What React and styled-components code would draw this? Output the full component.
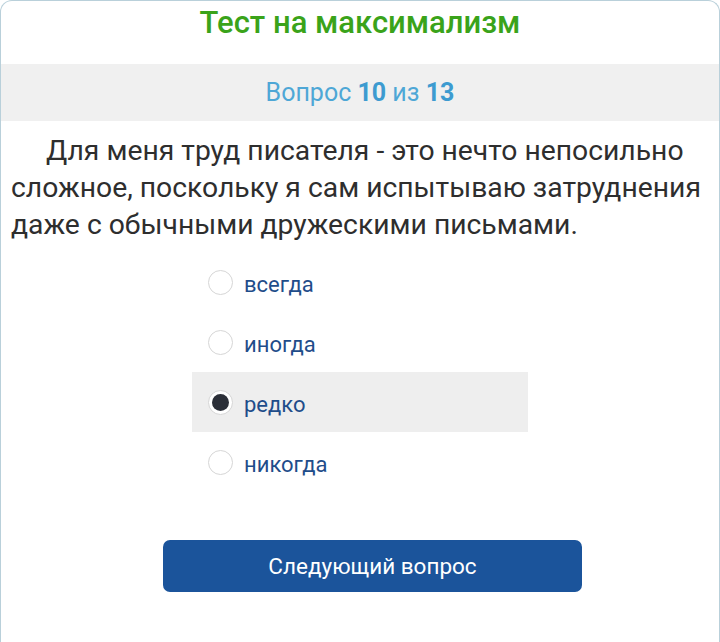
import React, { useState } from "react";
import styled, { createGlobalStyle } from "styled-components";

const GlobalStyle = createGlobalStyle`
  html, body {
    margin: 0;
    padding: 0;
    background: #ffffff;
  }
  body {
    font-family: Roboto, "Noto Sans", sans-serif;
  }
`;

const Card = styled.div`
  box-sizing: border-box;
  width: 720px;
  height: 642px;
  border: 1px solid #b9d0da;
  border-bottom: none;
  border-radius: 12px 12px 0 0;
  background: #ffffff;
  display: flex;
  flex-direction: column;
  overflow: hidden;
`;

const Title = styled.h1`
  margin: 0;
  height: 63px;
  padding-bottom: 20px;
  box-sizing: border-box;
  display: flex;
  align-items: center;
  justify-content: center;
  font-size: 31px;
  font-weight: 500;
  color: #3aa31a;
`;

const Counter = styled.div`
  height: 57px;
  background: #f0f0f0;
  display: flex;
  align-items: center;
  justify-content: center;
  font-size: 25px;
  color: #4ea7d6;
  b {
    font-weight: 700;
    color: #3d9bd0;
  }
`;

const Question = styled.p`
  margin: 11px 0 0;
  padding: 0 10px;
  font-size: 28.3px;
  line-height: 37px;
  text-indent: 35px;
  color: #2e2e2e;
`;

const Options = styled.div`
  width: 336px;
  margin: 9px auto 0;
  display: flex;
  flex-direction: column;
`;

const Option = styled.label`
  height: 60px;
  display: flex;
  align-items: center;
  gap: 11px;
  padding-left: 16px;
  background: ${(p) => (p.$checked ? "#eeeeee" : "transparent")};
  cursor: pointer;
`;

const Radio = styled.span`
  box-sizing: border-box;
  width: 25px;
  height: 25px;
  border-radius: 50%;
  border: 1px solid #d6d6d6;
  background: #ffffff;
  display: flex;
  align-items: center;
  justify-content: center;
  &::after {
    content: "";
    width: 17px;
    height: 17px;
    border-radius: 50%;
    background: ${(p) => (p.$checked ? "#2b2f38" : "transparent")};
  }
`;

const OptionText = styled.span`
  font-size: 22px;
  color: #1f4d8a;
  padding-top: 4px;
`;

const NextButton = styled.button`
  width: 419px;
  height: 52px;
  margin: 48px 0 0 162px;
  border: none;
  border-radius: 7px;
  background: #1b549b;
  color: #ffffff;
  font-family: Roboto, "Noto Sans", sans-serif;
  font-size: 22.5px;
  cursor: pointer;
`;

const answers = ["всегда", "иногда", "редко", "никогда"];

export default function App() {
  const [selected, setSelected] = useState(2);
  return (
    <>
      <GlobalStyle />
      <Card>
        <Title>Тест на максимализм</Title>
        <Counter>
          Вопрос&nbsp;<b>10</b>&nbsp;из&nbsp;<b>13</b>
        </Counter>
        <Question>
          Для меня труд писателя - это нечто непосильно сложное, поскольку я
          сам испытываю затруднения даже с обычными дружескими письмами.
        </Question>
        <Options>
          {answers.map((a, i) => (
            <Option
              key={a}
              $checked={selected === i}
              onClick={() => setSelected(i)}
            >
              <Radio $checked={selected === i} />
              <OptionText>{a}</OptionText>
            </Option>
          ))}
        </Options>
        <NextButton>Следующий вопрос</NextButton>
      </Card>
    </>
  );
}
